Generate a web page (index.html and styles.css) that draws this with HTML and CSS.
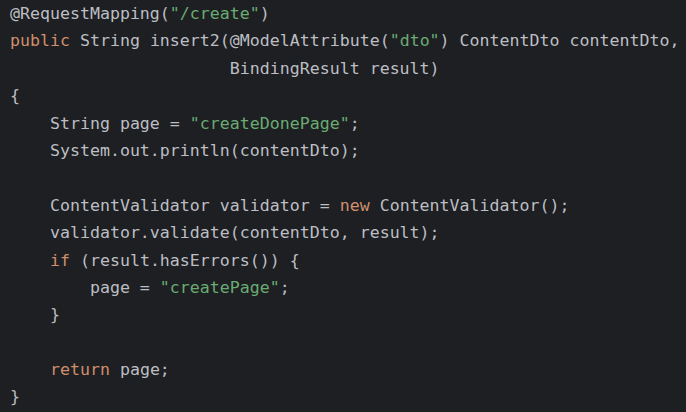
FILE: index.html
```html
<!DOCTYPE html>
<html>
<head>
<meta charset="utf-8">
<link rel="stylesheet" href="styles.css">
</head>
<body>
<div class="code">
<div class="line">@RequestMapping(<span class="str">"/create"</span>)</div>
<div class="line"><span class="kw">public</span> String insert2(@ModelAttribute(<span class="str">"dto"</span>) ContentDto contentDto,</div>
<div class="line">                      BindingResult result)</div>
<div class="line">{</div>
<div class="line">    String page = <span class="str">"createDonePage"</span>;</div>
<div class="line">    System.out.println(contentDto);</div>
<div class="line"> </div>
<div class="line">    ContentValidator validator = <span class="kw">new</span> ContentValidator();</div>
<div class="line">    validator.validate(contentDto, result);</div>
<div class="line">    <span class="kw">if</span> (result.hasErrors()) {</div>
<div class="line">        page = <span class="str">"createPage"</span>;</div>
<div class="line">    }</div>
<div class="line"> </div>
<div class="line">    <span class="kw">return</span> page;</div>
<div class="line">}</div>
</div>
</body>
</html>
```

FILE: styles.css
```css
html, body {
  margin: 0;
  padding: 0;
  background: #1e1f22;
  height: 100%;
  overflow: hidden;
}
.code {
  padding: 0 0 0 10px;
  font-family: "DejaVu Sans Mono", "Liberation Mono", monospace;
  font-size: 16.6px;
  line-height: 27.4px;
  color: #bcbec4;
}
.line {
  white-space: pre;
  height: 27.4px;
}
.kw { color: #cf8e6d; }
.str { color: #6aab73; }
```
